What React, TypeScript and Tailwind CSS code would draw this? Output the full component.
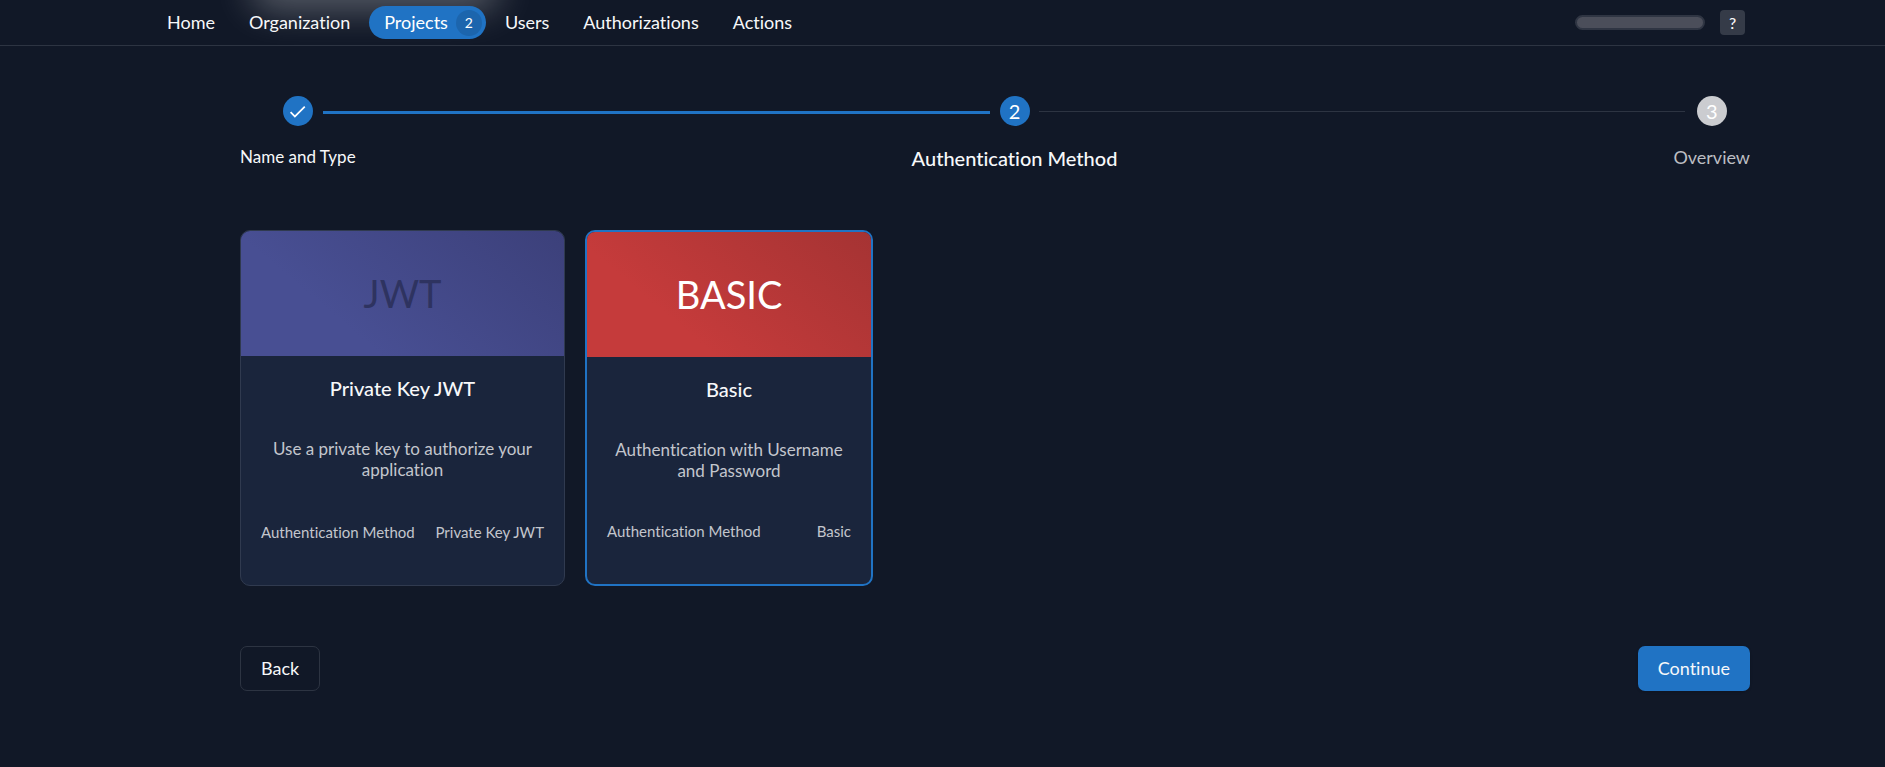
const links = ["Home", "Organization", "Projects", "Users", "Authorizations", "Actions"];

function Header() {
  return (
    <header className="relative flex h-[46px] items-center overflow-hidden border-b border-[#2d3442] pl-[152px] pr-[140px]">
      <div className="absolute left-[250px] top-[-34px] h-[44px] w-[250px] rounded-full bg-white/30 blur-[18px]" />
      <nav className="relative flex flex-1 items-center gap-1 text-lg/[33px]">
        {links.map((name) =>
          name === "Projects" ? (
            <a key={name} href="#projects" className="flex h-[33px] items-center gap-2 rounded-full bg-[#2073c4] pl-[15px] pr-1 text-white">
              {name}
              <span className="flex size-[26px] items-center justify-center rounded-full bg-[#1c65ad] text-sm">2</span>
            </a>
          ) : (
            <a key={name} href={`#${name.toLowerCase()}`} className="px-[15px]">
              {name}
            </a>
          ),
        )}
      </nav>
      <div className="h-[15px] w-[130px] rounded-full border-2 border-[#2f3543] bg-[#4b4e5a]" />
      <button aria-label="Help" className="ml-[15px] flex size-[25px] items-center justify-center rounded bg-[#353b48] text-base font-medium">
        ?
      </button>
    </header>
  );
}

function Stepper() {
  return (
    <ol className="flex items-start">
      <li className="flex flex-col items-center gap-4">
        <span className="flex size-[30px] items-center justify-center rounded-full bg-[#2073c4] text-white">
          <svg viewBox="0 0 24 24" className="size-[21px] fill-current" aria-hidden="true">
            <path d="M9 16.2 4.8 12l-1.4 1.4L9 19 21 7l-1.4-1.4z" />
          </svg>
        </span>
        <span className="text-[17px]/[30px]">Name and Type</span>
      </li>
      <li aria-hidden="true" className="flex-1">
        <div className="ml-[-33px] mr-[-78px] mt-[15px] h-[3px] bg-[#2073c4]" />
      </li>
      <li className="flex flex-col items-center gap-4">
        <span className="flex size-[30px] items-center justify-center rounded-full bg-[#2073c4] text-xl text-white">2</span>
        <span className="text-xl/8 font-medium">Authentication Method</span>
      </li>
      <li aria-hidden="true" className="flex-1">
        <div className="ml-[-78px] mr-[-12px] mt-[15px] h-px bg-[#2d3442]" />
      </li>
      <li className="flex flex-col items-center gap-4">
        <span className="flex size-[30px] items-center justify-center rounded-full bg-[#cbccd0] text-xl text-white">3</span>
        <span className="text-lg/[30px] text-[#bcbec3]">Overview</span>
      </li>
    </ol>
  );
}

type MethodProps = {
  banner: string;
  title: string;
  text: string;
  value: string;
  card: string;
  bannerStyle: string;
};

function Method({ banner, title, text, value, card, bannerStyle }: MethodProps) {
  return (
    <button className={`flex flex-col overflow-hidden rounded-[10px] bg-[#1a253c] text-center ${card}`}>
      <span className={`flex h-[125px] w-full items-center justify-center text-[38px] ${bannerStyle}`}>{banner}</span>
      <span className="mt-5 w-full text-xl/6 font-medium">{title}</span>
      <span className="mt-[38px] w-full px-5 text-[17px]/[21px] text-[#c3c6cd]">{text}</span>
      <span className="mb-[42px] mt-auto flex w-full justify-between px-5 text-[15px]/[22px] text-[#c3c6cd]">
        <span>Authentication Method</span>
        <span>{value}</span>
      </span>
    </button>
  );
}

export default function App() {
  return (
    <div className="min-h-screen bg-[#111827] font-['Lato',sans-serif] text-[#f7f8fa] [font-variant-ligatures:none]">
      <Header />
      <main className="pl-[240px] pr-[135px] pt-[50px]">
        <Stepper />
        <div className="mt-14 flex h-[356px] gap-5">
          <Method
            banner="JWT"
            title="Private Key JWT"
            text="Use a private key to authorize your application"
            value="Private Key JWT"
            card="w-[325px] border border-[#303a4f]"
            bannerStyle="bg-[linear-gradient(40deg,#484f93_30%,#3c407a)] text-[#2e3360]"
          />
          <Method
            banner="BASIC"
            title="Basic"
            text="Authentication with Username and Password"
            value="Basic"
            card="w-[288px] border-2 border-[#2073c4]"
            bannerStyle="bg-[linear-gradient(40deg,#c53b3b_30%,#a53333)] text-white"
          />
        </div>
        <div className="mt-[60px] flex justify-between text-lg">
          <button className="h-[45px] rounded-[7px] border border-[#2d3442] px-5 pb-0.5">Back</button>
          <button className="h-[45px] rounded-[7px] bg-[#2073c4] px-5 pb-0.5 shadow">Continue</button>
        </div>
      </main>
    </div>
  );
}
